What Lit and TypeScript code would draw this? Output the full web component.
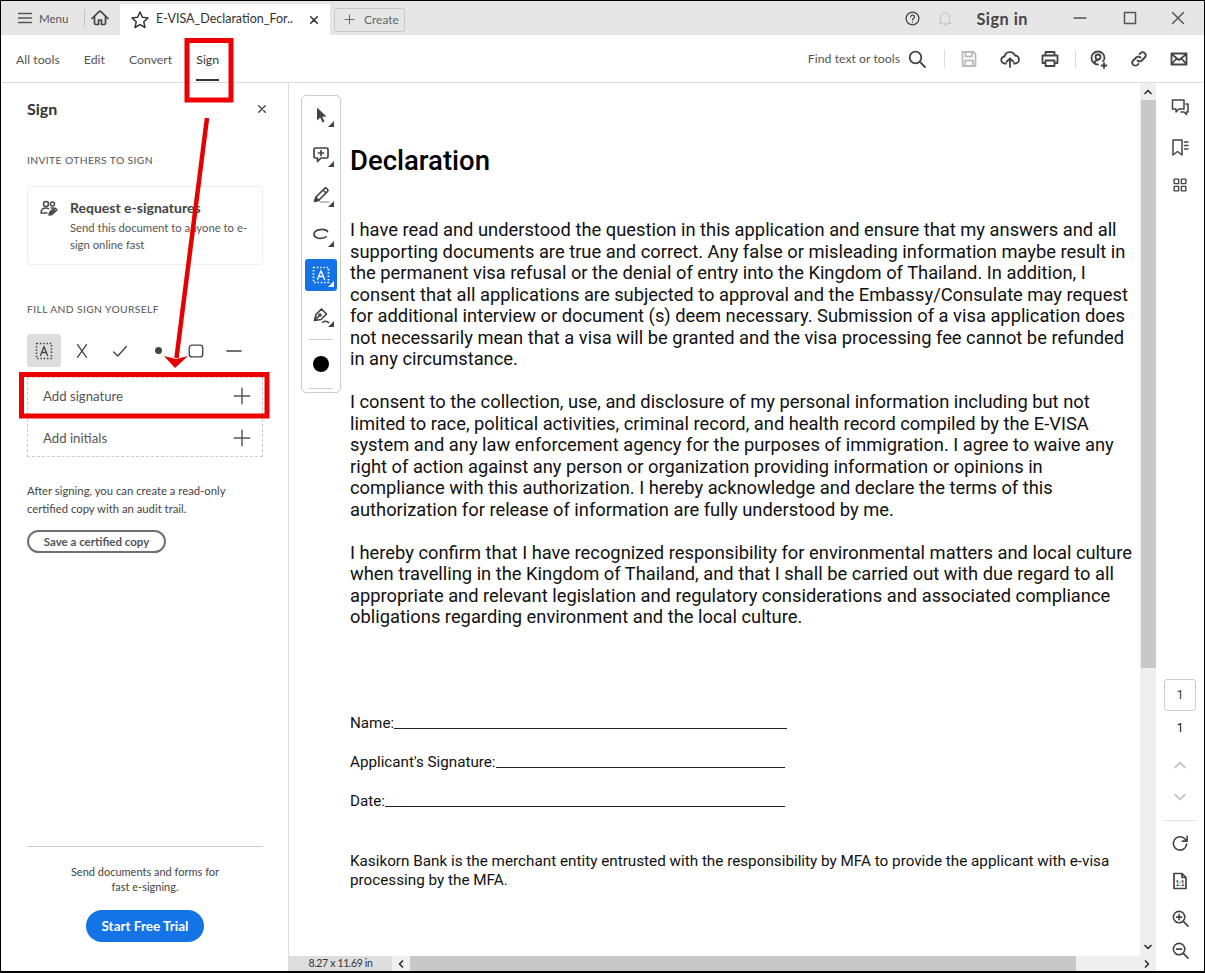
import { LitElement, html, css, svg } from 'lit';
import { customElement } from 'lit/decorators.js';

const P1 = [
  'I have read and understood the question in this application and ensure that my answers and all',
  'supporting documents are true and correct. Any false or misleading information maybe result in',
  'the permanent visa refusal or the denial of entry into the Kingdom of Thailand. In addition, I',
  'consent that all applications are subjected to approval and the Embassy/Consulate may request',
  'for additional interview or document (s) deem necessary. Submission of a visa application does',
  'not necessarily mean that a visa will be granted and the visa processing fee cannot be refunded',
  'in any circumstance.',
];
const P2 = [
  'I consent to the collection, use, and disclosure of my personal information including but not',
  'limited to race, political activities, criminal record, and health record compiled by the E-VISA',
  'system and any law enforcement agency for the purposes of immigration. I agree to waive any',
  'right of action against any person or organization providing information or opinions in',
  'compliance with this authorization. I hereby acknowledge and declare the terms of this',
  'authorization for release of information are fully understood by me.',
];
const P3 = [
  'I hereby confirm that I have recognized responsibility for environmental matters and local culture',
  'when travelling in the Kingdom of Thailand, and that I shall be carried out with due regard to all',
  'appropriate and relevant legislation and regulatory considerations and associated compliance',
  'obligations regarding environment and the local culture.',
];

// 20x20 stroke icon helper
const icon = (body: unknown, size = 20, cls = '') => html`<svg class="ic ${cls}" width=${size} height=${size} viewBox="0 0 20 20" fill="none" stroke="currentColor" stroke-width="1.5" stroke-linecap="round" stroke-linejoin="round">${body}</svg>`;

const I = {
  menu: svg`<path d="M3 5h14M3 10h14M3 15h14"/>`,
  home: svg`<path d="M2 10.500 8.800 3.800a1.700 1.700 0 0 1 2.400 0L18 10.500M4.500 8.500v6.500a1.500 1.500 0 0 0 1.500 1.500h2.500v-4.500h3v4.500H14a1.500 1.500 0 0 0 1.500-1.500V8.500"/>`,
  star: svg`<path d="m10 2 2.400 5.300 5.700.6-4.300 3.900 1.200 5.700-5-2.900-5 2.900 1.200-5.700-4.300-3.900 5.700-.6z"/>`,
  x: svg`<path d="m4.500 4.500 11 11M15.500 4.500l-11 11"/>`,
  plus: svg`<path d="M10 3v14M3 10h14"/>`,
  help: svg`<circle cx="10" cy="10" r="7.500"/><path d="M7.800 8a2.200 2.200 0 1 1 3.400 1.900c-.8.500-1.200.9-1.200 1.800M10 14.200v.1"/>`,
  bell: svg`<path d="M5 14.500V9a5 5 0 0 1 10 0v5.500l1.500 1.500h-13zM8.500 17.500h3"/>`,
  search: svg`<circle cx="8.500" cy="8.500" r="5.800"/><path d="m13 13 5 5"/>`,
  save: svg`<path d="M3.500 3h11l2 2v12h-13zM6.500 3v4.500h6.500V3M6 17v-5.500h8V17"/>`,
  upload: svg`<path d="M6 14.500H5a3.500 3.500 0 0 1-.5-7A5.500 5.500 0 0 1 15 6.500a4 4 0 0 1 0 8h-1M10 18V9.500M6.800 12.500 10 9.300l3.200 3.200"/>`,
  print: svg`<path d="M5.500 6.500V3h9v3.500M5.500 14H2.500V6.500h15V14h-3M5.500 11.500h9V17h-9z"/>`,
  share: svg`<path d="M9 15.500a6.500 6.500 0 1 1 6.500-6.500c0 1.500-.5 2.500-1.500 3"/><circle cx="9" cy="8" r="2.500"/><path d="M5.500 14c.5-2 2-3 3.500-3M15 14v5M12.500 16.500h5"/>`,
  link: svg`<path d="M8.500 11.500a3 3 0 0 0 4.300 0l3-3a3 3 0 0 0-4.300-4.300l-1 1M11.500 8.500a3 3 0 0 0-4.300 0l-3 3a3 3 0 0 0 4.300 4.300l1-1"/>`,
  mail: svg`<path d="M2.500 4.500h15v11h-15zM2.500 5 10 11l7.500-6M2.500 15l5.200-5.500M17.500 15l-5.200-5.500"/>`,
  people: svg`<circle cx="7" cy="5" r="2.500"/><circle cx="13.500" cy="5" r="2"/><path d="M2 14c0-3 2-5 5-5 1 0 2 .3 2.500 .8M2 14h6M12 9h2.500c1.500 0 3 1 3.500 2.500"/><path d="m10 16 .8-3 3.500-3 2.200 2.200-3.500 3.300z" fill="currentColor"/>`,
  cross: svg`<path d="M5 3 15 17M15 3 5 17"/>`,
  check: svg`<path d="m3 11 4.500 4.500L17 5"/>`,
  comment: svg`<path d="M4.500 3h11A1.500 1.500 0 0 1 17 4.500v7a1.500 1.500 0 0 1-1.500 1.500H10l-3.500 3.500V13h-2A1.500 1.500 0 0 1 3 11.500v-7A1.500 1.500 0 0 1 4.500 3zM10 5.500v5M7.500 8h5"/>`,
  pen: svg`<path d="m4 16 1-4L13.500 3.500a1.500 1.500 0 0 1 2.100 0l.9.9a1.500 1.500 0 0 1 0 2.100L8 15zM12 5l3 3"/><path d="m3.500 16.500 1.500-4 3 3z" fill="currentColor"/><path d="M9.500 17h8" stroke="#aaa"/>`,
  lasso: svg`<path d="M16.500 6.500C14.500 3.500 3.500 3.500 3 9c-.3 3.500 5 5 9 4 2-.5 3-1 3-1.500"/>`,
  sign: svg`<path d="M3.500 15.500 5 9.500 10.500 4l5 5-5.500 5.500zM3.500 15.500 8 11"/><circle cx="9" cy="10" r="1"/><path d="M12 17c1.500-1 3.500-1 5.500.5"/>`,
  textBox: svg`<path d="M2.500 2.500h15v15h-15z" stroke-dasharray="1.500 1.800" stroke-linecap="butt"/><path d="m6.500 14.500 3.500-9 3.500 9M8 11.500h4" stroke-width="1.300"/>`,
  pointer: svg`<path d="M6 2.500v13l3.200-3 2.300 5 2-.9-2.300-4.800 4.300-.3z" fill="currentColor" stroke="none"/>`,
  chat: svg`<path d="M2.500 3h11.500v9H9l-3 3v-3H2.500zM16 7h2v8h-1.500v2.500L14 15h-3"/>`,
  bookmark: svg`<path d="M3 3h9v15l-4.500-3.500L3 18zM14.500 5H18M14.500 8.500H18M14.500 12H18"/>`,
  grid: svg`<path d="M3.500 3.500h5v5h-5zM11.500 3.500h5v5h-5zM3.500 11.500h5v5h-5zM11.500 11.500h5v5h-5z"/>`,
  up: svg`<path d="m4 13 6-6 6 6"/>`,
  down: svg`<path d="m4 7 6 6 6-6"/>`,
  left: svg`<path d="m13 4-6 6 6 6"/>`,
  right: svg`<path d="m7 4 6 6-6 6"/>`,
  rotate: svg`<path d="M16.500 10.500a7 7 0 1 1-2-5.500L17 7.500M17 2.500v5h-5"/>`,
  fit: svg`<path d="M4 2.500h8l4 4v11H4zM12 2.500v4h4"/><text x="10" y="14.500" text-anchor="middle" font-size="6.500" font-weight="700" fill="currentColor" stroke="none">1:1</text>`,
  zoomIn: svg`<circle cx="8.500" cy="8.500" r="6"/><path d="m13 13 5 5M8.500 5.800v5.400M5.800 8.500h5.400"/>`,
  zoomOut: svg`<circle cx="8.500" cy="8.500" r="6"/><path d="m13 13 5 5M5.800 8.500h5.400"/>`,
};

@customElement('app-root')
export class AppRoot extends LitElement {
  static styles = css`
    :host {
      display: flex;
      flex-direction: column;
      position: relative;
      width: 1205px;
      height: 973px;
      box-sizing: border-box;
      border: 1px solid #000;
      border-bottom-width: 2px;
      overflow: hidden;
      background: #fff;
      color: #4b4b4b;
      font-family: Lato, 'Noto Sans', sans-serif;
      font-size: 13px;
    }
    * { box-sizing: border-box; }
    .ic { flex: none; display: block; }

    /* title bar */
    .titlebar { flex: none; height: 34px; background: #e6e6e6; display: flex; align-items: stretch; }
    .menu { width: 83px; display: flex; align-items: center; padding-left: 15px; gap: 5px; font-size: 11.500px; color: #555; }
    .menu .ic { stroke-width: 1.900; }
    .home { width: 36px; display: flex; align-items: center; justify-content: center; position: relative; color: #444; padding-right: 4px; }
    .home .ic { stroke-width: 1.700; }
    .home::before { content: ''; position: absolute; left: 0; top: 8px; bottom: 8px; border-left: 1px solid #c4c4c4; }
    .tab { width: 210px; margin-top: 3px; background: #fff; display: flex; align-items: center; padding: 0 9px 0 10px; color: #333; }
    .tab .name { margin-left: 6px; width: 145px; padding-bottom: 2px; font-size: 12.500px; white-space: nowrap; overflow: hidden; }
    .tab .close { margin-left: 7px; stroke-width: 2.600; }
    .create { margin: 7px 0 3px 4px; width: 71px; border: 1px solid #c8c8c8; border-radius: 3px; display: flex; align-items: center; padding: 0 0 1px 8px; gap: 8px; font-size: 12px; color: #666; }
    .spacer { flex: 1; }
    .tb-right { display: flex; align-items: center; color: #444; }
    .signin { font-size: 16.300px; font-weight: 700; color: #444; margin: 0 42px 0 22px; letter-spacing: .5px; }
    .bell { color: #c9c9c9; margin-left: 15px; }
    .win { display: flex; margin-right: 16px; color: #555; }
    .win .mx { margin: 0 28px 0 30px; }

    /* tool bar */
    .toolbar { flex: none; height: 48px; border-bottom: 1px solid #ddd; display: flex; align-items: stretch; padding: 0 15px; }
    .nav { display: flex; gap: 24px; align-items: center; padding-top: 1px; font-size: 12.300px; color: #555; }
    .nav span { position: relative; }
    .nav .on { color: #333; }
    .nav .on::after { content: ''; position: absolute; left: 0; right: 0; bottom: -14px; height: 2px; background: #333; }
    .actions { display: flex; align-items: center; color: #444; }
    .actions .ic { stroke-width: 1.800; }
    .find { font-size: 12.300px; color: #555; margin-right: 7px; }
    .vsep { width: 1px; height: 18px; background: #ddd; }
    .vsep.s1 { margin: 0 14px 0 17px; }
    .vsep.s2 { margin: 0 13px 0 15px; }
    .dim { color: #bbb; margin-right: 1px; }
    .act-gap { display: flex; gap: 20px; align-items: center; }

    .main { flex: 1; display: flex; min-height: 0; }

    /* left panel */
    .panel { flex: none; width: 288px; border-right: 1px solid #ddd; padding: 0 25px 0 26px; display: flex; flex-direction: column; }
    .panel-head { display: flex; justify-content: space-between; align-items: center; height: 54px; padding-bottom: 3px; font-size: 16px; font-weight: 700; color: #333; }
    .panel-head .ic { margin-right: -5px; color: #444; stroke-width: 2.200; }
    .section { margin-top: 16px; font-size: 10.300px; letter-spacing: .38px; color: #555; line-height: 14px; }
    .section.fill { margin-top: 37px; }
    .card { margin-top: 19px; height: 79px; border: 1px solid #eee; border-radius: 3px; padding: 12px 10px 0 11px; display: flex; gap: 11px; }
    .card h3 { margin: 0; font-size: 14px; font-weight: 700; color: #444; line-height: 18px; white-space: nowrap; }
    .card p { margin: 3px 0 0; font-size: 11.300px; line-height: 16.500px; color: #555; white-space: nowrap; }
    .tools { margin-top: 18px; display: flex; align-items: center; height: 33px; position: relative; color: #444; }
    .tools > * { width: 38px; display: flex; justify-content: center; flex: none; }
    .tools .first { width: 34px; height: 33px; background: #ddd; border-radius: 3px; align-items: center; margin-right: 2px; }
    .dot { width: 7px; height: 7px; border-radius: 50%; background: #444; }
    .add { height: 38px; border: 1px dashed #ccc; display: flex; align-items: center; justify-content: space-between; padding: 0 9px 0 15px; font-size: 13.200px; color: #555; }
    .add .ic { stroke-width: 1.300; }
    .add.a1 { margin-top: 10px; }
    .add.a2 { margin-top: 4px; border-top: none; }
    .note { margin: 25px 0 0; font-size: 11.300px; line-height: 18px; color: #444; }
    .pill { margin-top: 12px; align-self: flex-start; width: 139px; height: 23px; padding-bottom: 1px; border: 2px solid #707070; border-radius: 12px; display: flex; align-items: center; justify-content: center; font-size: 11.500px; font-weight: 700; color: #555; }
    .promo { margin-top: auto; border-top: 1px solid #ccc; padding: 17px 0 29px; text-align: center; display: flex; flex-direction: column; align-items: center; }
    .promo p { margin: 0; font-size: 11px; line-height: 15px; color: #444; }
    .trial { margin-top: 16px; width: 118px; height: 32px; border-radius: 16px; background: #1473e6; color: #fff; font-size: 13.500px; font-weight: 700; display: flex; align-items: center; justify-content: center; }

    /* document */
    .docwrap { flex: 1; min-width: 0; display: flex; flex-direction: column; }
    .docrow { flex: 1; min-height: 0; display: flex; }
    .doc { flex: 1; min-width: 0; position: relative; padding: 61px 0 0 61px; font-family: Roboto, sans-serif; color: #111; font-size: 18.320px; line-height: 21.500px; white-space: nowrap; overflow: hidden; }
    .doc h1 { margin: 0 0 41px; font-size: 27.500px; line-height: 34px; font-weight: 500; color: #000; }
    .doc p { margin: 0 0 21.500px; }
    .doc p div { height: 21.500px; }
    .fields { margin-top: 85.500px; font-size: 15.200px; display: flex; flex-direction: column; gap: 19px; line-height: 20px; }
    .fields > div { display: flex; align-items: flex-end; }
    .fields i { display: block; height: 1px; background: #222; margin-bottom: 4px; }
    .fields .l-name { width: 393px; }
    .fields .l-sig { width: 289px; }
    .fields .l-date { width: 400px; }
    .small { margin-top: 41px; font-size: 15.260px; line-height: 19px; }
    .palette { position: absolute; left: 12px; top: 12px; width: 40px; height: 298px; border: 1px solid #ccc; border-radius: 5px; background: #fff; display: flex; flex-direction: column; align-items: center; padding-top: 3px; color: #444; }
    .pt { position: relative; width: 32px; height: 32px; margin-bottom: 8px; display: flex; align-items: center; justify-content: center; border-radius: 3px; flex: none; }
    .pt .ic { stroke-width: 1.700; }
    .pt::after { content: ''; position: absolute; right: 3px; bottom: 4px; border: 3px solid transparent; border-right-color: #444; border-bottom-color: #444; }
    .pt.on { background: #1473e6; color: #fff; }
    .pt.on::after { border-right-color: #fff; border-bottom-color: #fff; }
    .psep { width: 24px; border-top: 1px solid #ccc; flex: none; }
    .swatch { width: 16px; height: 16px; border-radius: 50%; background: #000; margin: 16px 0; flex: none; }

    .vbar { flex: none; width: 16px; background: #efefef; display: flex; flex-direction: column; align-items: center; color: #333; }
    .varrow { flex: none; width: 16px; height: 17px; display: flex; align-items: center; justify-content: center; }
    .varrow.end { height: 18px; }
    .varrow .ic, .harrow .ic { stroke-width: 3.500; }
    .vthumb { width: 15px; height: 568px; background: #c8c8c8; }
    .hbar { flex: none; height: 15px; display: flex; background: #efefef; color: #333; }
    .status { width: 103px; background: #dedede; color: #333; font-size: 10.500px; letter-spacing: -.35px; line-height: 15px; text-align: center; }
    .harrow { width: 18px; display: flex; align-items: center; justify-content: center; }
    .hthumb { width: 666px; background: #c8c8c8; }

    /* right rail */
    .rail { flex: none; width: 48px; display: flex; flex-direction: column; align-items: center; color: #444; }
    .rail .top { display: flex; flex-direction: column; align-items: center; gap: 20px; margin-top: 14px; }
    .rail .top .grid { margin-top: -1px; }
    .pageno { margin-top: auto; width: 32px; height: 32px; border: 1px solid #ccc; border-radius: 3px; display: flex; align-items: center; justify-content: center; font-family: Roboto, sans-serif; font-size: 12px; color: #333; }
    .pagecount { margin-top: 9px; font-family: Roboto, sans-serif; font-size: 12px; line-height: 16px; color: #111; }
    .nudge { color: #c4c4c4; margin-top: 16px; }
    .nudge .ic { stroke-width: 2.400; }
    .nudge.first { margin-top: 21px; }
    .railsep { width: 32px; border-top: 1px solid #e4e4e4; margin-top: 15px; }
    .rail .bottom { display: flex; flex-direction: column; align-items: center; gap: 18px; margin: 13px 0 11.500px; }
    .rail .bottom .ic { stroke-width: 1.700; }
    .rail .bottom .zout { margin-top: -5px; }

    .marks { position: absolute; left: -1px; top: -1px; pointer-events: none; }
  `;

  private lines(rows: string[]) {
    return html`<p>${rows.map((r) => html`<div>${r}</div>`)}</p>`;
  }

  render() {
    return html`
      <div class="titlebar">
        <div class="menu">${icon(I.menu, 18)}<span>Menu</span></div>
        <div class="home">${icon(I.home, 20)}</div>
        <div class="tab">
          ${icon(I.star, 20)}
          <span class="name">E-VISA_Declaration_For..</span>
          ${icon(I.x, 12, 'close')}
        </div>
        <div class="create">${icon(I.plus, 13)}<span>Create</span></div>
        <div class="spacer"></div>
        <div class="tb-right">
          ${icon(I.help, 17)}
          <span class="bell">${icon(I.bell, 18)}</span>
          <span class="signin">Sign in</span>
          <div class="win">
            ${icon(svg`<path d="M4 10h12"/>`, 20)}
            ${icon(svg`<path d="M4.500 4.500h11v11h-11z"/>`, 20, 'mx')}
            ${icon(I.x, 20)}
          </div>
        </div>
      </div>

      <div class="toolbar">
        <div class="nav">
          <span>All tools</span><span>Edit</span><span>Convert</span><span class="on">Sign</span>
        </div>
        <div class="spacer"></div>
        <div class="actions">
          <span class="find">Find text or tools</span>
          ${icon(I.search, 20)}
          <span class="vsep s1"></span>
          <div class="act-gap">
            <span class="dim">${icon(I.save, 20)}</span>
            ${icon(I.upload, 20)}
            ${icon(I.print, 20)}
          </div>
          <span class="vsep s2"></span>
          <div class="act-gap">
            ${icon(I.share, 20)}
            ${icon(I.link, 20)}
            ${icon(I.mail, 20)}
          </div>
        </div>
      </div>

      <div class="main">
        <aside class="panel">
          <div class="panel-head"><span>Sign</span>${icon(I.x, 12)}</div>
          <div class="section">INVITE OTHERS TO SIGN</div>
          <div class="card">
            ${icon(I.people, 20)}
            <div>
              <h3>Request e-signatures</h3>
              <p>Send this document to anyone to e-<br />sign online fast</p>
            </div>
          </div>
          <div class="section fill">FILL AND SIGN YOURSELF</div>
          <div class="tools">
            <div class="first">${icon(I.textBox, 20)}</div>
            <div>${icon(I.cross, 18)}</div>
            <div>${icon(I.check, 18)}</div>
            <div><span class="dot"></span></div>
            <div>${icon(svg`<rect x="2.500" y="3.500" width="15" height="13" rx="3"/>`, 18)}</div>
            <div>${icon(svg`<path d="M2 10h16"/>`, 18)}</div>
          </div>
          <div class="add a1"><span>Add signature</span>${icon(I.plus, 22)}</div>
          <div class="add a2"><span>Add initials</span>${icon(I.plus, 22)}</div>
          <p class="note">After signing, you can create a read-only certified copy with an audit trail.</p>
          <div class="pill">Save a certified copy</div>
          <div class="promo">
            <p>Send documents and forms for<br />fast e-signing.</p>
            <div class="trial">Start Free Trial</div>
          </div>
        </aside>

        <div class="docwrap">
          <div class="docrow">
            <div class="doc">
              <h1>Declaration</h1>
              ${this.lines(P1)}
              ${this.lines(P2)}
              ${this.lines(P3)}
              <div class="fields">
                <div>Name:<i class="l-name"></i></div>
                <div>Applicant's Signature:<i class="l-sig"></i></div>
                <div>Date:<i class="l-date"></i></div>
              </div>
              <div class="small">
                Kasikorn Bank is the merchant entity entrusted with the responsibility by MFA to provide the applicant with e-visa<br />
                processing by the MFA.
              </div>
              <div class="palette">
                <div class="pt">${icon(I.pointer, 20)}</div>
                <div class="pt">${icon(I.comment, 20)}</div>
                <div class="pt">${icon(I.pen, 20)}</div>
                <div class="pt">${icon(I.lasso, 20)}</div>
                <div class="pt on">${icon(I.textBox, 20)}</div>
                <div class="pt">${icon(I.sign, 20)}</div>
                <div class="psep"></div>
                <div class="swatch"></div>
                <div class="psep"></div>
              </div>
            </div>
            <div class="vbar">
              <div class="varrow">${icon(I.up, 10)}</div>
              <div class="vthumb"></div>
              <div class="spacer"></div>
              <div class="varrow end">${icon(I.down, 10)}</div>
            </div>
          </div>
          <div class="hbar">
            <div class="status">8.27 x 11.69 in</div>
            <div class="harrow">${icon(I.left, 10)}</div>
            <div class="hthumb"></div>
            <div class="spacer"></div>
            <div class="harrow">${icon(I.right, 10)}</div>
          </div>
        </div>

        <aside class="rail">
          <div class="top">
            ${icon(I.chat, 20)}
            ${icon(I.bookmark, 20)}
            ${icon(I.grid, 18, 'grid')}
          </div>
          <div class="pageno">1</div>
          <div class="pagecount">1</div>
          <span class="nudge first">${icon(I.up, 16)}</span>
          <span class="nudge">${icon(I.down, 16)}</span>
          <div class="railsep"></div>
          <div class="bottom">
            ${icon(I.rotate, 19)}
            ${icon(I.fit, 20)}
            ${icon(I.zoomIn, 19)}
            ${icon(I.zoomOut, 19, 'zout')}
          </div>
        </aside>
      </div>

      <!-- red annotations drawn over the screenshot -->
      <svg class="marks" width="1205" height="973" viewBox="0 0 1205 973" fill="none">
        <rect x="187" y="40.500" width="44" height="59.500" stroke="#ee0000" stroke-width="5"/>
        <rect x="21.500" y="374.500" width="245.500" height="41.500" stroke="#ee0000" stroke-width="5"/>
        <path d="M207 118 176.500 358" stroke="#e60000" stroke-width="4.500"/>
        <path d="M164 356 176 359 188 356 175 368z" fill="#e60000"/>
      </svg>
    `;
  }
}
